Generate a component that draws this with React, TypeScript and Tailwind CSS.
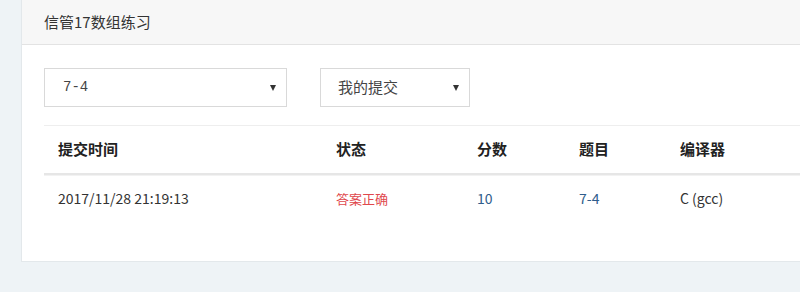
import React from "react";

const font = { fontFamily: '"Noto Sans CJK SC", "Noto Sans", sans-serif' };

function Arrow() {
  return <span className="w-0 h-0 border-l-[3px] border-r-[3px] border-t-[6px] border-l-transparent border-r-transparent border-t-[#333]" />;
}

export default function App() {
  const cols = "grid grid-cols-[278px_141px_102px_101px_1fr]";
  return (
    <div className="w-[800px] h-[292px] bg-[#eef3f6] overflow-hidden pl-[21px]" style={font}>
      <div className="h-[262px] bg-white border-l border-b border-[#e3e8eb] flex flex-col">
        <div className="h-[45px] bg-[#f7f7f7] border-b border-[#e3e3e3] flex items-center pl-[22px] text-[15px] text-[#333]">
          信管17数组练习
        </div>
        <div className="pl-[22px] pt-[23px]">
          <div className="flex gap-[33px]">
            <div className="w-[243px] h-[39px] border border-[#d9d9d9] flex items-center justify-between pl-[18px] pr-[10px] text-[14px] text-[#444]">
              <span style={{ fontFamily: '"Liberation Mono", monospace' }}>7-4</span>
              <Arrow />
            </div>
            <div className="w-[150px] h-[39px] border border-[#d9d9d9] flex items-center justify-between pl-[17px] pr-[10px] text-[15px] text-[#444]">
              <span>我的提交</span>
              <Arrow />
            </div>
          </div>
          <div className="mt-[18px] border-t border-[#eeeeee]">
            <div className={`${cols} h-[49px] items-center border-b-2 border-[#e6e6e6] text-[15px] font-bold text-[#222]`}>
              <div className="pl-[14px]">提交时间</div>
              <div className="pl-[14px]">状态</div>
              <div className="pl-[14px]">分数</div>
              <div className="pl-[14px]">题目</div>
              <div className="pl-[14px]">编译器</div>
            </div>
            <div className={`${cols} h-[46px] items-center border-t border-[#f2f2f2] text-[14px] text-[#333]`}>
              <div className="pl-[14px]">2017/11/28 21:19:13</div>
              <div className="pl-[14px] text-[13px] text-[#e0474c]">答案正确</div>
              <div className="pl-[14px] text-[#2f5d8c]">10</div>
              <div className="pl-[14px] text-[#2f5d8c]">7-4</div>
              <div className="pl-[14px]">C (gcc)</div>
            </div>
          </div>
        </div>
      </div>
    </div>
  );
}
